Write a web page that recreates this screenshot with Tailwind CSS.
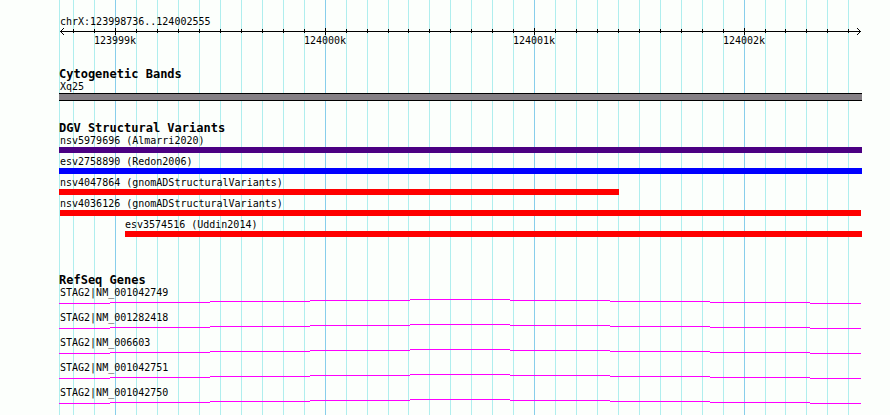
<!DOCTYPE html>
<html lang="en">
<head>
  <meta charset="UTF-8" />
  <meta name="viewport" content="width=device-width, initial-scale=1.0" />
  <title>chrX:123998736..124002555</title>
  <script src="https://cdn.jsdelivr.net/npm/@tailwindcss/browser@4"></script>
</head>
<body class="bg-[#fcfffc] text-black">
  <main class="relative min-h-screen ml-[59px] mr-7 pt-4 font-['DejaVu_Sans_Mono',monospace] text-[10px] leading-3 whitespace-nowrap">

    <!-- Grid lines, one every 100 bp -->
    <svg class="absolute inset-0 -z-10 w-full h-full" viewBox="0 0 803 415" preserveAspectRatio="none" shape-rendering="crispEdges" fill="none" aria-hidden="true">
      <path stroke="#afeeee" vector-effect="non-scaling-stroke" d="M.5 0v415M14.5 0v415M35.5 0v415M77.5 0v415M98.5 0v415M119.5 0v415M140.5 0v415M161.5 0v415M182.5 0v415M203.5 0v415M224.5 0v415M245.5 0v415M287.5 0v415M308.5 0v415M329.5 0v415M349.5 0v415M370.5 0v415M391.5 0v415M412.5 0v415M433.5 0v415M454.5 0v415M496.5 0v415M517.5 0v415M538.5 0v415M559.5 0v415M580.5 0v415M601.5 0v415M622.5 0v415M643.5 0v415M664.5 0v415M706.5 0v415M726.5 0v415M747.5 0v415M768.5 0v415M789.5 0v415" />
      <path stroke="#87ceeb" vector-effect="non-scaling-stroke" d="M56.5 0v415M266.5 0v415M475.5 0v415M685.5 0v415" />
    </svg>

    <!-- Ruler -->
    <header>
      <h1 class="pl-px">chrX:123998736..124002555</h1>
      <svg class="block w-full h-[7px]" viewBox="0 0 803 7" preserveAspectRatio="none" shape-rendering="crispEdges" fill="none" stroke="#000" aria-hidden="true">
        <path d="M1 3.5H802" />
        <path d="M14.5 1v4M35.5 1v4M77.5 1v4M98.5 1v4M119.5 1v4M140.5 1v4M161.5 1v4M182.5 1v4M203.5 1v4M224.5 1v4M245.5 1v4M287.5 1v4M308.5 1v4M329.5 1v4M349.5 1v4M370.5 1v4M391.5 1v4M412.5 1v4M433.5 1v4M454.5 1v4M496.5 1v4M517.5 1v4M538.5 1v4M559.5 1v4M580.5 1v4M601.5 1v4M622.5 1v4M643.5 1v4M664.5 1v4M706.5 1v4M726.5 1v4M747.5 1v4M768.5 1v4M789.5 1v4" />
        <path d="M56.5 0v7M266.5 0v7M475.5 0v7M685.5 0v7" />
        <path fill="#000" stroke="none" d="M1 3h1v1h-1zM2 2h1v1h-1zM3 1h1v1h-1zM4 0h1v1h-1zM2 4h1v1h-1zM3 5h1v1h-1zM4 6h1v1h-1zM801 3h1v1h-1zM800 2h1v1h-1zM799 1h1v1h-1zM798 0h1v1h-1zM800 4h1v1h-1zM799 5h1v1h-1zM798 6h1v1h-1z" />
      </svg>
      <div class="grid grid-cols-[35fr_210fr_209fr_210fr_139fr]">
        <span class="col-start-2">123999k</span>
        <span>124000k</span>
        <span>124001k</span>
        <span>124002k</span>
      </div>
    </header>

    <section class="mt-5">
      <h2 class="text-[12px] leading-[14px] font-bold">Cytogenetic Bands</h2>
      <p class="pl-px">Xq25</p>
      <div class="h-2 border-y border-black bg-[#858085]"></div>
    </section>

    <section class="mt-5">
      <h2 class="text-[12px] leading-[14px] font-bold">DGV Structural Variants</h2>
      <div class="flex flex-col gap-[3px]">
        <div>
          <p class="pl-px">nsv5979696 (Almarri2020)</p>
          <div class="h-1.5 bg-[#4b0082]"></div>
        </div>
        <div>
          <p class="pl-px">esv2758890 (Redon2006)</p>
          <div class="h-1.5 bg-[#0000ff]"></div>
        </div>
        <div>
          <p class="pl-px">nsv4047864 (gnomADStructuralVariants)</p>
          <div class="h-1.5 bg-[#ff0000]" style="width: 69.74%"></div>
        </div>
        <div>
          <p class="pl-px">nsv4036126 (gnomADStructuralVariants)</p>
          <div class="h-1.5 mx-px bg-[#ff0000]"></div>
        </div>
        <div style="margin-left: 8.22%">
          <p>esv3574516 (Uddin2014)</p>
          <div class="h-1.5 bg-[#ff0000]"></div>
        </div>
      </div>
    </section>

    <section class="mt-9">
      <h2 class="text-[12px] leading-[14px] font-bold">RefSeq Genes</h2>
      <div class="flex flex-col gap-2">
        <div>
          <p class="pl-px">STAG2|NM_001042749</p>
          <svg class="block w-full h-[5px]" viewBox="0 0 803 5" preserveAspectRatio="none" shape-rendering="crispEdges" fill="none" stroke="#ff00ff" aria-hidden="true">
            <path id="intron" d="M0 4.5H51M51 3.5H151M151 2.5H251M251 1.5H351M351 .5H451M451 1.5H551M551 2.5H651M651 3.5H751M751 4.5H802" />
          </svg>
        </div>
        <div>
          <p class="pl-px">STAG2|NM_001282418</p>
          <svg class="block w-full h-[5px]" viewBox="0 0 803 5" preserveAspectRatio="none" shape-rendering="crispEdges" fill="none" stroke="#ff00ff" aria-hidden="true"><use href="#intron" /></svg>
        </div>
        <div>
          <p class="pl-px">STAG2|NM_006603</p>
          <svg class="block w-full h-[5px]" viewBox="0 0 803 5" preserveAspectRatio="none" shape-rendering="crispEdges" fill="none" stroke="#ff00ff" aria-hidden="true"><use href="#intron" /></svg>
        </div>
        <div>
          <p class="pl-px">STAG2|NM_001042751</p>
          <svg class="block w-full h-[5px]" viewBox="0 0 803 5" preserveAspectRatio="none" shape-rendering="crispEdges" fill="none" stroke="#ff00ff" aria-hidden="true"><use href="#intron" /></svg>
        </div>
        <div>
          <p class="pl-px">STAG2|NM_001042750</p>
          <svg class="block w-full h-[5px]" viewBox="0 0 803 5" preserveAspectRatio="none" shape-rendering="crispEdges" fill="none" stroke="#ff00ff" aria-hidden="true"><use href="#intron" /></svg>
        </div>
      </div>
    </section>
  </main>
</body>
</html>
